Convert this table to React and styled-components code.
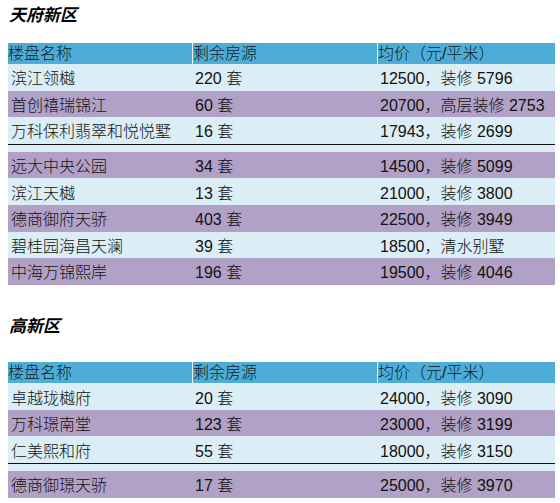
import styled, { createGlobalStyle } from "styled-components";

const GlobalStyle = createGlobalStyle`
  body {
    margin: 0;
    background: #ffffff;
    font-family: "Liberation Sans", "Noto Sans CJK SC", sans-serif;
    color: #111;
  }
`;

const sections = [
  {
    title: "天府新区",
    top: 0,
    below: 15,
    groups: [
      [
        ["滨江领樾", "220 套", "12500，装修 5796"],
        ["首创禧瑞锦江", "60 套", "20700，高层装修 2753"],
        ["万科保利翡翠和悦悦墅", "16 套", "17943，装修 2699"],
      ],
      [
        ["远大中央公园", "34 套", "14500，装修 5099"],
        ["滨江天樾", "13 套", "21000，装修 3800"],
        ["德商御府天骄", "403 套", "22500，装修 3949"],
        ["碧桂园海昌天澜", "39 套", "18500，清水别墅"],
        ["中海万锦熙岸", "196 套", "19500，装修 4046"],
      ],
    ],
  },
  {
    title: "高新区",
    top: 26,
    below: 23.5,
    groups: [
      [
        ["卓越珑樾府", "20 套", "24000，装修 3090"],
        ["万科璟南堂", "123 套", "23000，装修 3199"],
        ["仁美熙和府", "55 套", "18000，装修 3150"],
      ],
      [["德商御璟天骄", "17 套", "25000，装修 3970"]],
    ],
  },
];

const headers = ["楼盘名称", "剩余房源", "均价（元/平米）"];

export default function App() {
  return (
    <Page>
      <GlobalStyle />
      {sections.map((s) => {
        let idx = 0;
        return (
          <Section key={s.title}>
            <Title $top={s.top} $below={s.below}>{s.title}</Title>
            <Table>
              <HeadRow>
                {headers.map((h, i) => (
                  <HeadCell key={h} $first={i === 0}>{h}</HeadCell>
                ))}
              </HeadRow>
              {s.groups.map((g, gi) => (
                <div key={gi}>
                  {gi > 0 && <Divider />}
                  {g.map((r) => {
                    const tone = idx++ % 2 === 0 ? "light" : "purple";
                    return (
                      <Row key={r[0]} $tone={tone}>
                        {r.map((c) => (
                          <Cell key={c}>{c}</Cell>
                        ))}
                      </Row>
                    );
                  })}
                </div>
              ))}
            </Table>
          </Section>
        );
      })}
    </Page>
  );
}

// ==== Styled Components ====

const Page = styled.div`
  padding: 0 5px 0 8px;
  width: 547px;
`;

const Section = styled.section`
  display: flex;
  flex-direction: column;
`;

const Title = styled.h2`
  margin: ${({ $top }) => $top}px 0 ${({ $below }) => $below}px 1px;
  height: 28px;
  line-height: 28px;
  font-size: 17px;
  font-weight: 700;
  font-style: italic;
  font-family: "Noto Sans CJK SC", sans-serif;
  color: #000;
`;

const Table = styled.div`
  display: flex;
  flex-direction: column;
  width: 547px;
`;

const grid = `
  display: grid;
  grid-template-columns: 184px 185px 1fr;
  align-items: center;
`;

const HeadRow = styled.div`
  ${grid}
  height: 21px;
  background: #4dadd8;
`;

const HeadCell = styled.div`
  height: 21px;
  line-height: 22px;
  font-size: 16px;
  font-weight: 300;
  color: #0d1b24;
  border-left: ${({ $first }) => ($first ? "none" : "1px solid #e4f2f8")};
  white-space: nowrap;
  overflow: hidden;
`;

const Row = styled.div`
  ${grid}
  height: 26.6px;
  background: ${({ $tone }) => ($tone === "light" ? "#dbeef5" : "#b1a1c7")};
`;

const Cell = styled.div`
  padding-left: 3px;
  font-size: 16px;
  font-weight: 300;
  color: #111;
  white-space: nowrap;
`;

const Divider = styled.div`
  height: 7px;
  border-top: 1px solid #111;
  background: #dbeef5;
`;
